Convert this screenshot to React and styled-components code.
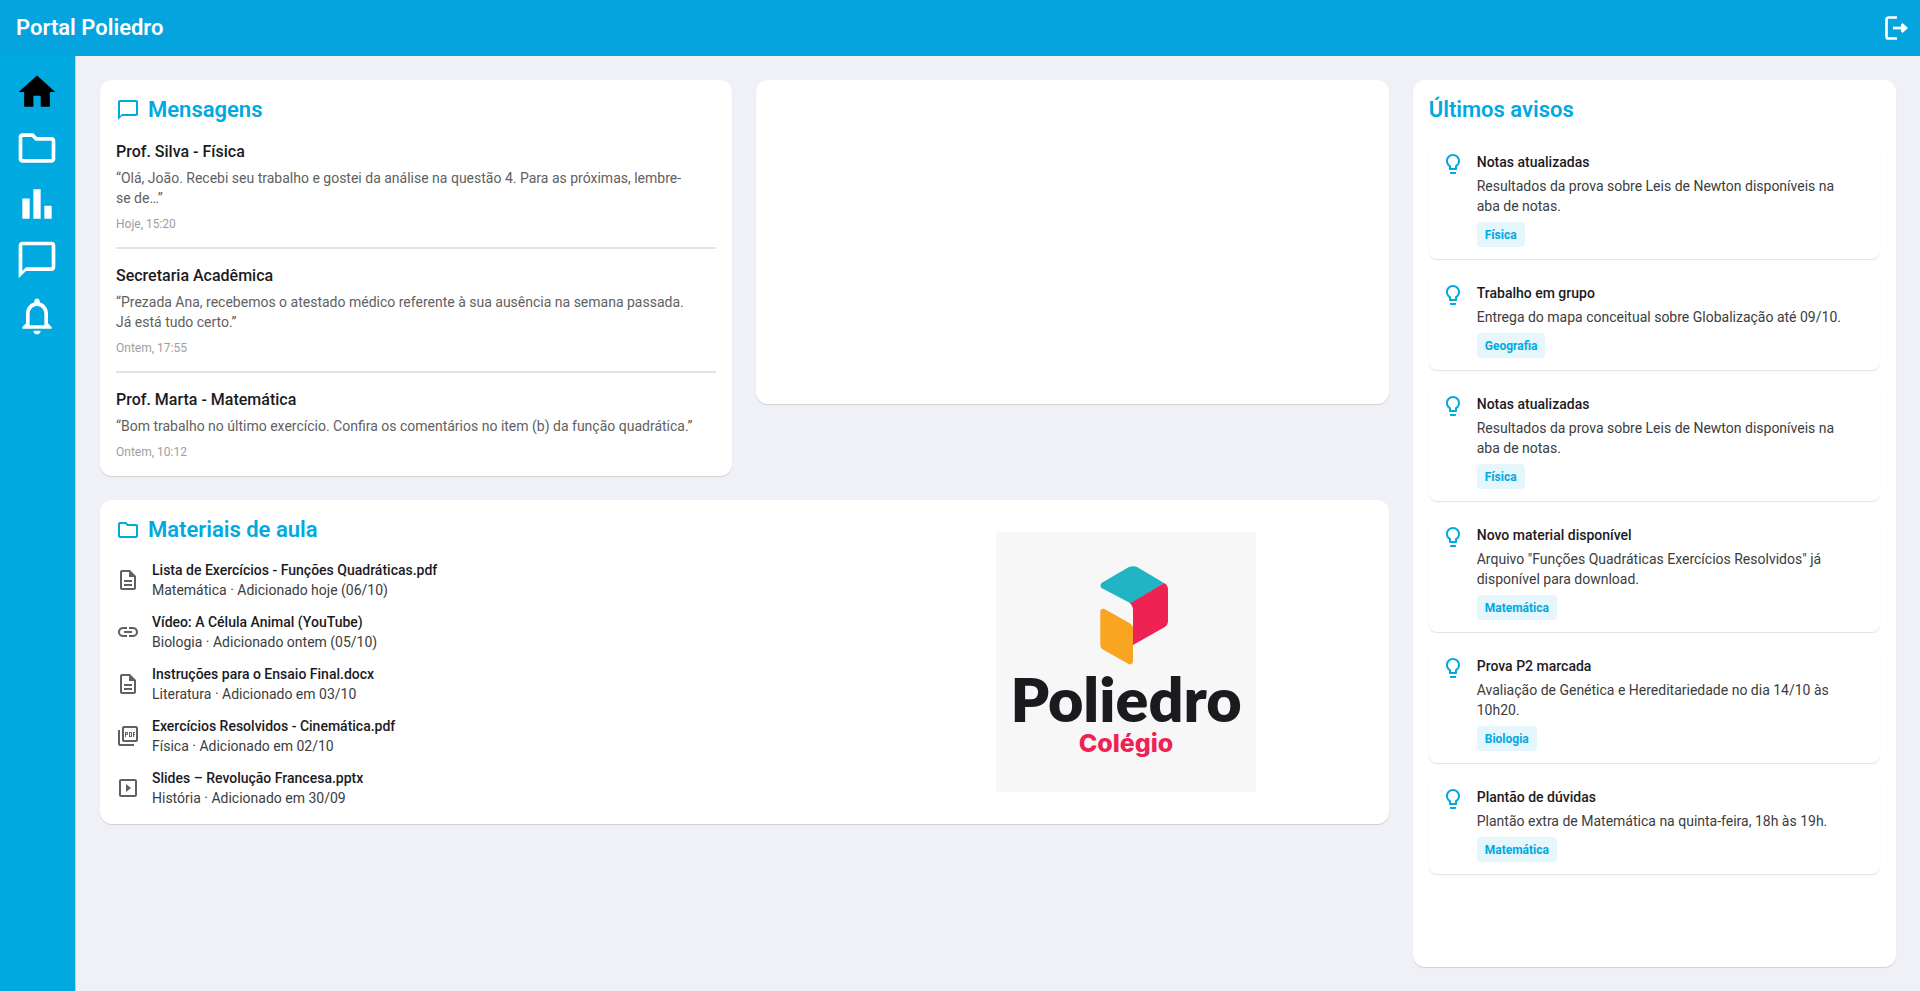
import React from "react";
import styled, { createGlobalStyle } from "styled-components";
import {
  MdHome, MdOutlineFolder, MdBarChart, MdChatBubbleOutline, MdNotificationsNone,
  MdOutlineDescription, MdLink, MdOutlinePictureAsPdf, MdOutlineSlideshow, MdLightbulbOutline,
} from "react-icons/md";

const primary = "#00a9e0";
const ink = "#1b1b1f";

const GlobalStyle = createGlobalStyle`
  *, *::before, *::after { box-sizing: border-box; }
  body {
    margin: 0;
    background: #f0f1f6;
    color: ${ink};
    font-family: Roboto, "Liberation Sans", sans-serif;
    font-size: 14px;
    line-height: 20px;
  }
  h1, h2, h3, p, ul { margin: 0; padding: 0; }
  ul { list-style: none; }
  svg { display: block; }
`;

const Page = styled.div`
  min-height: 100vh;
  display: flex;
  flex-direction: column;
`;

const TopBar = styled.header`
  height: 56px;
  padding: 0 8px 0 16px;
  display: flex;
  align-items: center;
  justify-content: space-between;
  background: #06a4de;
  color: #fff;
`;

const Brand = styled.h1`
  font-size: 22px;
  line-height: 28px;
  font-weight: 600;
`;

const IconButton = styled.button`
  width: 32px;
  height: 32px;
  padding: 0;
  border: 0;
  background: none;
  color: inherit;
  display: grid;
  place-items: center;
  cursor: pointer;
`;

const Body = styled.div`
  flex: 1;
  display: flex;
`;

const SideNav = styled.nav`
  width: 76px;
  padding: 8px 1px 0 0;
  display: flex;
  flex-direction: column;
  background: ${primary};
  border-right: 1px solid #c9ccd2;
`;

const NavLink = styled.a`
  height: 56px;
  display: grid;
  place-items: center;
  font-size: 44px;
  color: ${(p) => (p.$active ? "#000" : "#fff")};
`;

const Main = styled.main`
  flex: 1;
  min-width: 0;
  padding: 24px;
  display: grid;
  grid-template-columns: minmax(0, 8fr) minmax(0, 3fr);
  gap: 24px;
`;

const LeftArea = styled.div`
  display: flex;
  flex-direction: column;
  gap: 24px;
`;

const TopRow = styled.div`
  display: grid;
  grid-template-columns: repeat(2, minmax(0, 1fr));
  align-items: start;
  gap: 24px;
`;

const Card = styled.section`
  padding: 16px;
  border-radius: 12px;
  background: #fff;
  box-shadow: 0 1px 1px rgba(0, 0, 0, 0.14);
`;

const EmptyCard = styled(Card)`
  min-height: 324px;
`;

const CardTitle = styled.h2`
  margin-bottom: 16px;
  display: flex;
  align-items: center;
  gap: 8px;
  font-size: 22px;
  line-height: 28px;
  font-weight: 600;
  color: ${primary};
  svg { font-size: 24px; }
`;

const Message = styled.li`
  & + & {
    margin-top: 15px;
    padding-top: 15px;
    border-top: 2px solid #e3e3ea;
  }
`;

const Sender = styled.h3`
  font-size: 16px;
  line-height: 24px;
  font-weight: 500;
`;

const Excerpt = styled.p`
  margin-top: 4px;
  color: #616161;
`;

const Time = styled.time`
  display: block;
  margin-top: 8px;
  font-size: 12px;
  line-height: 16px;
  color: #9e9e9e;
`;

const MaterialsCard = styled(Card)`
  display: grid;
  grid-template-columns: minmax(0, 3fr) minmax(0, 2fr);
  gap: 24px;
`;

const FileList = styled.ul`
  display: flex;
  flex-direction: column;
  gap: 12px;
`;

const FileRow = styled.li`
  display: flex;
  align-items: center;
  gap: 12px;
  svg { font-size: 24px; color: #616161; }
`;

const ItemTitle = styled.h3`
  font-size: 14px;
  line-height: 20px;
  font-weight: 500;
`;

const ItemText = styled.p`
  color: #3c3c40;
`;

const LogoPanel = styled.div`
  width: 260px;
  height: 260px;
  place-self: center;
  background: #f7f7f7;
`;

const Notices = styled.ul`
  display: flex;
  flex-direction: column;
  gap: 12px;
`;

const Notice = styled.li`
  padding: 12px;
  display: flex;
  gap: 12px;
  border-radius: 8px;
  background: #fff;
  box-shadow: 0 1px 1px rgba(0, 0, 0, 0.12);
  svg { flex: none; font-size: 24px; color: ${primary}; }
`;

const NoticeBody = styled.div`
  display: flex;
  flex-direction: column;
  align-items: flex-start;
  ${ItemText} { margin: 4px 0 6px; }
`;

const Tag = styled.span`
  padding: 5px 8px 4px;
  border-radius: 4px;
  background: #e5f6fc;
  color: ${primary};
  font-size: 12px;
  line-height: 16px;
  font-weight: 700;
`;

const LogoutIcon = () => (
  <svg width="24" height="24" viewBox="0 0 24 24" fill="none" stroke="currentColor">
    <path d="M13 1.500H4.500a2 2 0 0 0-2 2v17a2 2 0 0 0 2 2H13" strokeWidth="2.700" />
    <path d="M9 12h11" strokeWidth="2.700" />
    <path d="M18.500 7l5.500 5-5.500 5-1.500-1.500V8.500z" fill="currentColor" stroke="none" />
  </svg>
);

const Logo = () => (
  <svg width="260" height="260" viewBox="0 0 260 260" role="img" aria-label="Poliedro Colégio">
    <path fill="#20b4c4" d="M105.500 51 L132.500 35.300 Q137 33 141.500 35.300 L168 51 L135 71.500 L105.500 56 Q103.500 53.500 105.500 51Z" />
    <path fill="#ee2354" d="M134 71.500 L168 51 Q172 52.500 172 58 V89 Q172 93 168 95.500 L137 113 V78 Q137 74 134 71.500Z" />
    <path fill="#faa522" d="M104.300 80 Q104.300 76 108.500 77 L133.500 91 Q137 93.500 137 97 V130 Q136 133.500 132.500 132 L107 117.500 Q104.300 116 104.300 112Z" />
    <text x="130" y="190" textAnchor="middle" fontFamily="Lato, sans-serif" fontWeight="800" fontSize="61" fill="#1b1b1f">Poliedro</text>
    <text x="130" y="220" textAnchor="middle" fontFamily="Inter, sans-serif" fontWeight="800" fontSize="25" fill="#ee2354">Colégio</text>
  </svg>
);

const navItems = [
  ["Início", MdHome], ["Materiais", MdOutlineFolder], ["Notas", MdBarChart],
  ["Mensagens", MdChatBubbleOutline], ["Avisos", MdNotificationsNone],
];

const messages = [
  ["Prof. Silva - Física", <>“Olá, João. Recebi seu trabalho e gostei da análise na questão 4. Para as próximas, lembre-<br />se de…”</>, "Hoje, 15:20"],
  ["Secretaria Acadêmica", <>“Prezada Ana, recebemos o atestado médico referente à sua ausência na semana passada.<br />Já está tudo certo.”</>, "Ontem, 17:55"],
  ["Prof. Marta - Matemática", "“Bom trabalho no último exercício. Confira os comentários no item (b) da função quadrática.”", "Ontem, 10:12"],
];

const files = [
  [MdOutlineDescription, "Lista de Exercícios - Funções Quadráticas.pdf", "Matemática · Adicionado hoje (06/10)"],
  [MdLink, "Vídeo: A Célula Animal (YouTube)", "Biologia · Adicionado ontem (05/10)"],
  [MdOutlineDescription, "Instruções para o Ensaio Final.docx", "Literatura · Adicionado em 03/10"],
  [MdOutlinePictureAsPdf, "Exercícios Resolvidos - Cinemática.pdf", "Física · Adicionado em 02/10"],
  [MdOutlineSlideshow, "Slides – Revolução Francesa.pptx", "História · Adicionado em 30/09"],
];

const grades = <>Resultados da prova sobre Leis de Newton disponíveis na<br />aba de notas.</>;
const notices = [
  ["Notas atualizadas", grades, "Física"],
  ["Trabalho em grupo", "Entrega do mapa conceitual sobre Globalização até 09/10.", "Geografia"],
  ["Notas atualizadas", grades, "Física"],
  ["Novo material disponível", <>Arquivo "Funções Quadráticas Exercícios Resolvidos" já<br />disponível para download.</>, "Matemática"],
  ["Prova P2 marcada", <>Avaliação de Genética e Hereditariedade no dia 14/10 às<br />10h20.</>, "Biologia"],
  ["Plantão de dúvidas", "Plantão extra de Matemática na quinta-feira, 18h às 19h.", "Matemática"],
];

export default function App() {
  return (
    <Page>
      <GlobalStyle />
      <TopBar>
        <Brand>Portal Poliedro</Brand>
        <IconButton type="button" aria-label="Sair"><LogoutIcon /></IconButton>
      </TopBar>
      <Body>
        <SideNav aria-label="Principal">
          {navItems.map(([label, Icon], i) => (
            <NavLink key={label} href="#" aria-label={label} $active={i === 0}><Icon /></NavLink>
          ))}
        </SideNav>
        <Main>
          <LeftArea>
            <TopRow>
              <Card>
                <CardTitle><MdChatBubbleOutline />Mensagens</CardTitle>
                <ul>
                  {messages.map(([sender, text, time]) => (
                    <Message key={sender}>
                      <Sender>{sender}</Sender>
                      <Excerpt>{text}</Excerpt>
                      <Time>{time}</Time>
                    </Message>
                  ))}
                </ul>
              </Card>
              <EmptyCard />
            </TopRow>
            <MaterialsCard>
              <div>
                <CardTitle><MdOutlineFolder />Materiais de aula</CardTitle>
                <FileList>
                  {files.map(([Icon, name, info]) => (
                    <FileRow key={name}>
                      <Icon />
                      <div>
                        <ItemTitle>{name}</ItemTitle>
                        <ItemText>{info}</ItemText>
                      </div>
                    </FileRow>
                  ))}
                </FileList>
              </div>
              <LogoPanel><Logo /></LogoPanel>
            </MaterialsCard>
          </LeftArea>
          <Card as="aside">
            <CardTitle>Últimos avisos</CardTitle>
            <Notices>
              {notices.map(([title, text, tag], i) => (
                <Notice key={i}>
                  <MdLightbulbOutline />
                  <NoticeBody>
                    <ItemTitle>{title}</ItemTitle>
                    <ItemText>{text}</ItemText>
                    <Tag>{tag}</Tag>
                  </NoticeBody>
                </Notice>
              ))}
            </Notices>
          </Card>
        </Main>
      </Body>
    </Page>
  );
}
